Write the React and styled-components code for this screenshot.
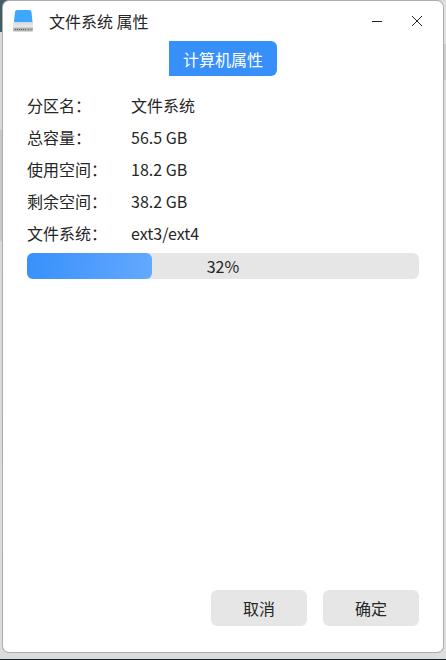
import React from "react"

import styled, { createGlobalStyle } from "styled-components"

const GlobalStyle = createGlobalStyle`
  * {
    box-sizing: border-box;
  }
  body {
    margin: 0;
    font-family: "Noto Sans CJK SC", sans-serif;
    font-size: 16px;
    color: #262626;
  }
  button {
    border: none;
    padding: 0;
    font: inherit;
    color: inherit;
  }
`

const Desktop = styled.div`
  display: flex;
  min-height: 100vh;
  padding: 1px 3px 8px;
  background:
    linear-gradient(#0b2530, #0b2530) bottom / 100% 1px no-repeat,
    linear-gradient(90deg, #455c68 50%, #7b868d 75%, #dcdcdc) top / 100% 1px no-repeat,
    linear-gradient(#455c68, #455c68) left top / 10px 32px no-repeat,
    linear-gradient(#e0e0e0 44px, #cccccc 44px, #cccccc 80px, #dedede 80px) right top / 10px 100% no-repeat,
    linear-gradient(#d8d8d8 130px, #c8c8c8 130px, #c8c8c8 241px, #d8d8d8 241px, #dcdcdc);
`

const Window = styled.main`
  display: flex;
  flex-direction: column;
  flex: 1;
  border-radius: 6px;
  background: #ffffff;
  box-shadow: 0 0 0 1px #adadad;
`

const TitleBar = styled.header`
  display: flex;
  align-items: center;
  height: 40px;
  padding: 0 6px 0 8px;
`

const Title = styled.h1`
  flex: 1;
  margin: 0;
  margin-left: 14px;
  font-size: 16px;
  font-weight: normal;
  line-height: 40px;
`

const WindowButton = styled.button`
  display: flex;
  align-items: center;
  justify-content: center;
  width: 40px;
  height: 40px;
  background: transparent;
`

const Tabs = styled.nav`
  display: flex;
  justify-content: center;
`

const Tab = styled.button`
  width: 108px;
  height: 35px;
  border-radius: 0 6px 6px 0;
  background: #3790fa;
  && {
    color: #ffffff;
  }
`

const Content = styled.section`
  flex: 1;
  padding: 13px 24px;
`

const InfoList = styled.dl`
  margin: 0;
`

const InfoRow = styled.div`
  display: grid;
  grid-template-columns: 104px 1fr;
  line-height: 32px;
  dd {
    margin: 0;
  }
`

const UsageBar = styled.div`
  display: grid;
  height: 26px;
  margin-top: 4px;
  border-radius: 6px;
  background: #e6e6e6;
  line-height: 26px;
  text-align: center;
  > * {
    grid-area: 1 / 1;
  }
`

const UsageFill = styled.div`
  border-radius: 6px;
  background: linear-gradient(100deg, #3790fa, #64a9ff);
`

const Footer = styled.footer`
  display: flex;
  justify-content: flex-end;
  gap: 16px;
  padding: 0 24px 26px;
`

const FooterButton = styled.button`
  width: 96px;
  height: 36px;
  border-radius: 6px;
  background: #e6e6e6;
`

const info = [
  { label: "分区名：", value: "文件系统" },
  { label: "总容量：", value: "56.5 GB" },
  { label: "使用空间：", value: "18.2 GB" },
  { label: "剩余空间：", value: "38.2 GB" },
  { label: "文件系统：", value: "ext3/ext4" },
]

function DriveIcon() {
  return (
    <svg width="24" height="24" viewBox="0 0 24 24" aria-hidden="true">
      <defs>
        <linearGradient id="driveTop" x1="0" y1="0" x2="0" y2="1">
          <stop offset="0" stopColor="#3fa9fb" />
          <stop offset="1" stopColor="#38a8ff" />
        </linearGradient>
        <linearGradient id="driveEdge" x1="0" y1="0" x2="0" y2="1">
          <stop offset="0" stopColor="#d6d6d6" />
          <stop offset="1" stopColor="#efefef" />
        </linearGradient>
      </defs>
      <path d="M4 3Q4.2 1 6 1H18.5Q20.3 1 20.5 3L21.6 14H2.8Z" fill="url(#driveTop)" />
      <path d="M2.6 13H21.6L22 19H2Z" fill="url(#driveEdge)" />
      <path d="M2 18.5H22V21.5Q22 22.5 21 22.5H3Q2 22.5 2 21.5Z" fill="#b4b4b4" />
      <path d="M4 20.5H15" stroke="#505050" strokeWidth="1" strokeDasharray="1 1" />
      <circle cx="17.5" cy="20.5" r="1" fill="#58b368" />
      <path d="M19.4 20.5H20.8" stroke="#888888" />
    </svg>
  )
}

function App() {
  const used = 32

  return (
    <>
      <GlobalStyle />
      <Desktop>
        <Window>
          <TitleBar>
            <DriveIcon />
            <Title>文件系统 属性</Title>
            <WindowButton aria-label="最小化">
              <svg width="12" height="12" viewBox="0 0 12 12">
                <path d="M1 6.5H11" stroke="#262626" />
              </svg>
            </WindowButton>
            <WindowButton aria-label="关闭">
              <svg width="12" height="12" viewBox="0 0 12 12">
                <path d="M1 1L11 11M11 1L1 11" stroke="#262626" />
              </svg>
            </WindowButton>
          </TitleBar>
          <Tabs>
            <Tab>计算机属性</Tab>
          </Tabs>
          <Content>
            <InfoList>
              {info.map(({ label, value }) => (
                <InfoRow key={label}>
                  <dt>{label}</dt>
                  <dd>{value}</dd>
                </InfoRow>
              ))}
            </InfoList>
            <UsageBar
              role="progressbar"
              aria-label="使用空间"
              aria-valuenow={used}
              aria-valuemin={0}
              aria-valuemax={100}
            >
              <UsageFill style={{ width: `${used}%` }} />
              <span>{used}%</span>
            </UsageBar>
          </Content>
          <Footer>
            <FooterButton>取消</FooterButton>
            <FooterButton>确定</FooterButton>
          </Footer>
        </Window>
      </Desktop>
    </>
  )
}

export default App
